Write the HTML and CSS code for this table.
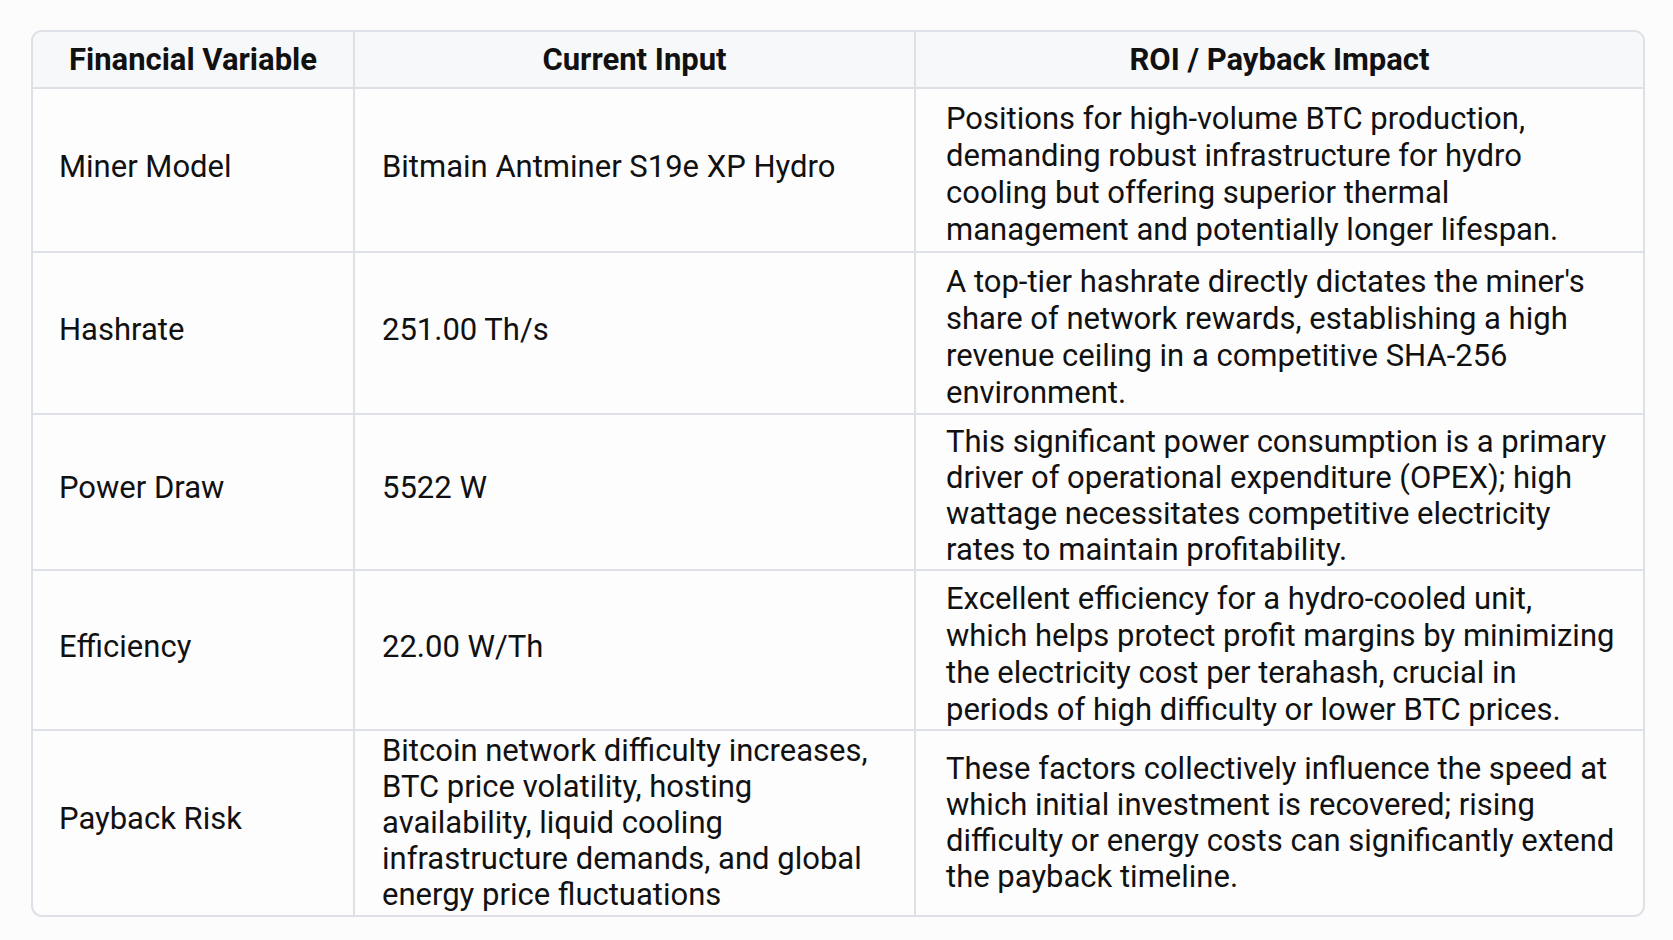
FILE: index.html
```html
<!DOCTYPE html>
<html>
<head>
<meta charset="utf-8">
<link rel="stylesheet" href="styles.css">
</head>
<body>
<div class="wrap">
<table class="fin">
<colgroup><col class="c1"><col class="c2"><col class="c3"></colgroup>
<thead>
<tr><th>Financial Variable</th><th>Current Input</th><th>ROI / Payback Impact</th></tr>
</thead>
<tbody>
<tr class="r1"><td>Miner Model</td><td>Bitmain Antminer S19e XP Hydro</td><td>Positions for high-volume BTC production, demanding robust infrastructure for hydro cooling but offering superior thermal management and potentially longer lifespan.</td></tr>
<tr class="r2"><td>Hashrate</td><td>251.00 Th/s</td><td>A top-tier hashrate directly dictates the miner's share of network rewards, establishing a high revenue ceiling in a competitive SHA-256 environment.</td></tr>
<tr class="r3"><td>Power Draw</td><td>5522 W</td><td>This significant power consumption is a primary driver of operational expenditure (OPEX); high wattage necessitates competitive electricity rates to maintain profitability.</td></tr>
<tr class="r4"><td>Efficiency</td><td>22.00 W/Th</td><td>Excellent efficiency for a hydro-cooled unit, which helps protect profit margins by minimizing the electricity cost per terahash, crucial in periods of high difficulty or lower BTC prices.</td></tr>
<tr class="r5"><td>Payback Risk</td><td>Bitcoin network difficulty increases, BTC price volatility, hosting availability, liquid cooling infrastructure demands, and global energy price fluctuations</td><td>These factors collectively influence the speed at which initial investment is recovered; rising difficulty or energy costs can significantly extend the payback timeline.</td></tr>
</tbody>
</table>
</div>
</body>
</html>
```

FILE: styles.css
```css
html, body {
  margin: 0;
  padding: 0;
  background: #fcfcfd;
}
.wrap {
  padding: 30px 0 0 31px;
}
.fin {
  width: 1610px;
  table-layout: fixed;
  border-collapse: separate;
  border-spacing: 0;
  border: 2px solid #dde1e7;
  border-radius: 11px;
  background: #fdfdfe;
  font-family: Roboto, "Liberation Sans", sans-serif;
  color: #111111;
  font-size: 31px;
  line-height: 37px;
  overflow: hidden;
}
.c1 { width: 322px; }
.c2 { width: 561px; }
.c3 { width: 727px; }
.fin th {
  background: #f7f8fa;
  font-weight: 700;
  height: 55px;
  padding: 0 10px;
  text-align: center;
  border-bottom: 2px solid #dde1e7;
  border-right: 2px solid #dde1e7;
}
.fin td {
  padding: 9px 26px 1px 26px;
  vertical-align: middle;
  border-bottom: 2px solid #dde1e7;
  border-right: 2px solid #dde1e7;
  font-weight: 400;
}
.fin td:nth-child(1), .fin td:nth-child(2) {
  padding-top: 1px;
  padding-bottom: 9px;
}
.fin td:nth-child(1) { padding-left: 26px; }
.fin td:nth-child(2) { padding-left: 27px; padding-right: 16px; }
.fin th:last-child, .fin td:last-child { border-right: none; }
.fin tbody tr:last-child td { border-bottom: none; }
.fin td:nth-child(3) { padding-left: 30px; padding-right: 25px; }
.r1 td { height: 152px; }
.r2 td { height: 150px; }
.r3 td { height: 144px; line-height: 36px; }
.r4 td { height: 148px; }
.fin .r5 td { height: 180px; line-height: 36px; padding-top: 2px; padding-bottom: 2px; }
.fin .r5 td:nth-child(1) { height: 176px; padding-bottom: 8px; padding-top: 0; }
```
